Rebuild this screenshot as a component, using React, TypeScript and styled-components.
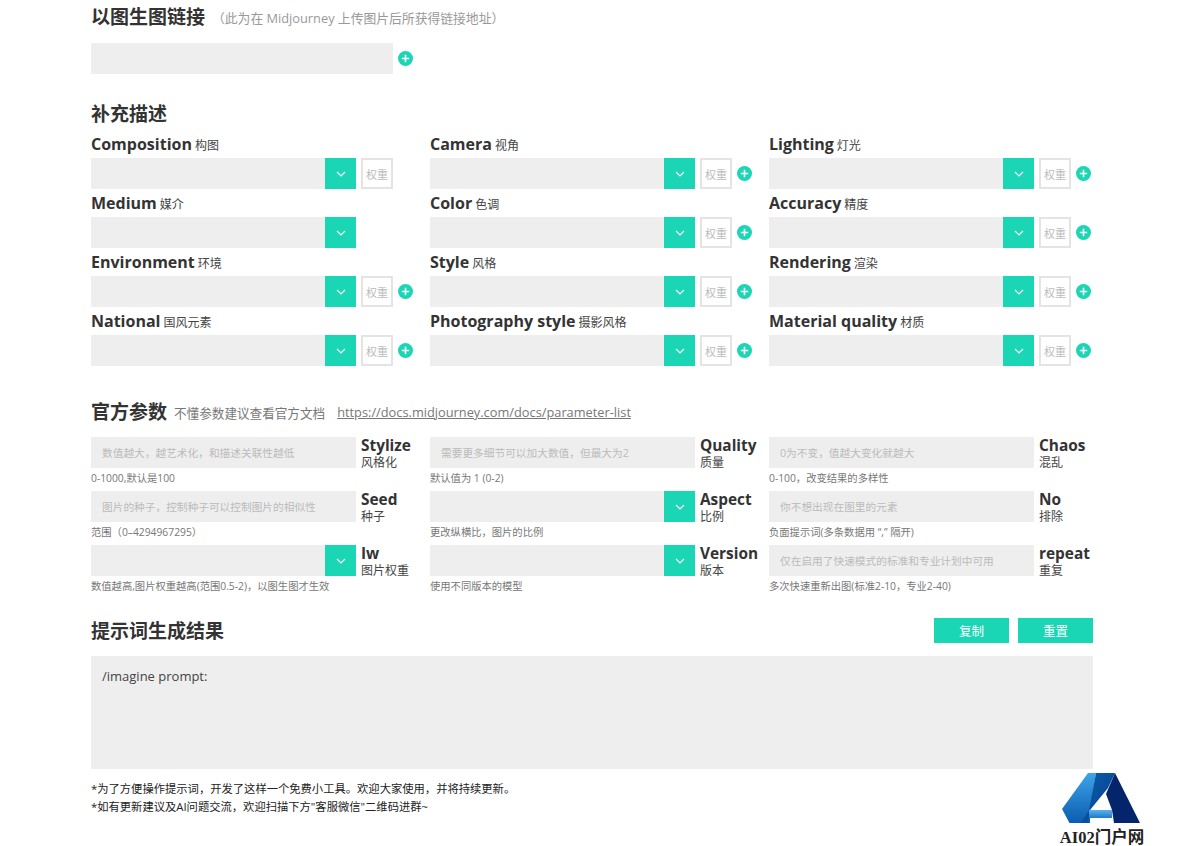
import styled, { createGlobalStyle } from 'styled-components';

const GlobalStyle = createGlobalStyle`
  html, body {
    margin: 0;
    padding: 0;
    background: #fff;
  }
  body {
    font-family: "Open Sans", "Noto Sans CJK SC", sans-serif;
    color: #333;
    overflow: hidden;
  }
`;

const Page = styled.div`
  position: relative;
  width: 1200px;
  height: 846px;
  padding-left: 91px;
  box-sizing: border-box;
  overflow: hidden;
`;

const Content = styled.div`
  width: 1002px;
`;

const Heading = styled.div<{ $height: number; $top?: number }>`
  display: flex;
  align-items: center;
  height: ${(p) => p.$height}px;
  margin-top: ${(p) => p.$top ?? 0}px;
`;

const HeadingTitle = styled.h2`
  margin: 0;
  font-size: 19px;
  line-height: 26px;
  font-weight: 700;
  color: #333;
`;

const HeadingNote = styled.span`
  margin-left: 7px;
  font-size: 12.8px;
  color: #999;
`;

const HeadingHint = styled.span`
  margin-left: 7px;
  font-size: 12.6px;
  color: #777;
`;

const DocLink = styled.a`
  margin-left: 12px;
  font-size: 12.8px;
  color: #777;
  text-decoration: underline;
`;

const LinkRow = styled.div`
  display: flex;
  align-items: center;
  margin-top: 9px;
`;

const WideInput = styled.div`
  width: 302px;
  height: 31px;
  background: #eee;
`;

const PlusIcon = styled.svg`
  display: block;
  flex: none;
  width: 15px;
  height: 15px;
  margin-left: 5px;
`;

const Plus = () => (
  <PlusIcon viewBox="0 0 15 15">
    <circle cx="7.5" cy="7.5" r="7.5" fill="#1bd6b4" />
    <path d="M7.5 3.8v7.4M3.8 7.5h7.4" stroke="#fff" strokeWidth="1.6" />
  </PlusIcon>
);

const DescGrid = styled.div`
  display: grid;
  grid-template-columns: repeat(3, 322px);
  column-gap: 17px;
  margin-top: 2px;
`;

const DescCell = styled.div`
  height: 59px;
`;

const DescLabel = styled.div`
  height: 28px;
  padding-top: 2px;
  box-sizing: border-box;
  font-size: 16px;
  line-height: 24px;
  font-weight: 700;
  color: #333;
  white-space: nowrap;
`;

const LabelSub = styled.span`
  margin-left: 3px;
  font-size: 12px;
  font-weight: 400;
  color: #444;
`;

const FieldRow = styled.div`
  display: flex;
  align-items: center;
`;

const SelectBox = styled.div`
  display: flex;
  justify-content: flex-end;
  flex: none;
  width: 265px;
  height: 31px;
  background: #eee;
`;

const ArrowButton = styled.div`
  display: flex;
  align-items: center;
  justify-content: center;
  width: 31px;
  height: 31px;
  background: #1bd6b4;
`;

const ArrowIcon = styled.svg`
  width: 10px;
  height: 6px;
`;

const Arrow = () => (
  <ArrowButton>
    <ArrowIcon viewBox="0 0 10 6">
      <path d="M1 1l4 4 4-4" fill="none" stroke="#fff" strokeWidth="1.2" />
    </ArrowIcon>
  </ArrowButton>
);

const WeightBox = styled.div`
  flex: none;
  display: flex;
  align-items: center;
  justify-content: center;
  width: 32px;
  height: 31px;
  margin-left: 5px;
  box-sizing: border-box;
  border: 2px solid #e4e4e4;
  font-size: 11px;
  color: #bbb;
`;

const ParamGrid = styled.div`
  display: grid;
  grid-template-columns: repeat(3, 322px);
  column-gap: 17px;
  margin-top: 11px;
`;

const ParamCell = styled.div`
  height: 54px;
`;

const ParamRow = styled.div`
  display: flex;
  height: 31px;
`;

const ParamInput = styled.div`
  flex: none;
  display: flex;
  align-items: center;
  width: 265px;
  height: 31px;
  padding-left: 11px;
  box-sizing: border-box;
  background: #eee;
  font-size: 10.7px;
  color: #bbb;
  white-space: nowrap;
`;

const ParamLabel = styled.div`
  margin-left: 5px;
  white-space: nowrap;
`;

const ParamName = styled.div`
  margin-top: 0;
  font-size: 15.4px;
  line-height: 18px;
  font-weight: 700;
  color: #333;
`;

const ParamSub = styled.div`
  margin-top: 1px;
  font-size: 12px;
  line-height: 14px;
  color: #444;
`;

const ParamHelp = styled.div`
  margin-top: 3px;
  font-size: 10.3px;
  line-height: 15px;
  color: #777;
  white-space: nowrap;
`;

const ResultHeader = styled.div`
  display: flex;
  align-items: center;
  justify-content: space-between;
  margin-top: 14px;
  height: 36px;
`;

const ButtonRow = styled.div`
  display: flex;
  gap: 9px;
  margin-top: -2px;
`;

const ActionButton = styled.button`
  width: 75px;
  height: 25px;
  padding: 0;
  border: 0;
  background: #1bd6b4;
  color: #fff;
  font-family: inherit;
  font-size: 12.5px;
`;

const ResultBox = styled.div`
  height: 113px;
  margin-top: 7px;
  padding: 11px;
  box-sizing: border-box;
  background: #eee;
  font-size: 13px;
  line-height: 18px;
  color: #444;
`;

const Notes = styled.div`
  margin-top: 11px;
  font-size: 11.3px;
  line-height: 18px;
  color: #222;
`;

const Watermark = styled.div`
  position: absolute;
  left: 1052px;
  top: 772px;
  width: 100px;
  text-align: center;
`;

const WatermarkLogo = styled.svg`
  display: block;
  width: 82px;
  height: 52px;
  margin-left: 8px;
`;

const WatermarkText = styled.div`
  margin-top: 4px;
  font-family: "Liberation Serif", "Noto Sans CJK SC", serif;
  font-size: 16.5px;
  line-height: 20px;
  font-weight: 700;
  color: #222;
  white-space: nowrap;
`;

const desc = [
  { name: 'Composition', sub: '构图', weight: true, plus: false },
  { name: 'Camera', sub: '视角', weight: true, plus: true },
  { name: 'Lighting', sub: '灯光', weight: true, plus: true },
  { name: 'Medium', sub: '媒介', weight: false, plus: false },
  { name: 'Color', sub: '色调', weight: true, plus: true },
  { name: 'Accuracy', sub: '精度', weight: true, plus: true },
  { name: 'Environment', sub: '环境', weight: true, plus: true },
  { name: 'Style', sub: '风格', weight: true, plus: true },
  { name: 'Rendering', sub: '渲染', weight: true, plus: true },
  { name: 'National', sub: '国风元素', weight: true, plus: true },
  { name: 'Photography style', sub: '摄影风格', weight: true, plus: true },
  { name: 'Material quality', sub: '材质', weight: true, plus: true },
];

const params = [
  { name: 'Stylize', sub: '风格化', hint: '数值越大，越艺术化，和描述关联性越低', help: '0-1000,默认是100' },
  { name: 'Quality', sub: '质量', hint: '需要更多细节可以加大数值，但最大为2', help: '默认值为 1 (0-2)' },
  { name: 'Chaos', sub: '混乱', hint: '0为不变，值越大变化就越大', help: '0-100，改变结果的多样性' },
  { name: 'Seed', sub: '种子', hint: '图片的种子，控制种子可以控制图片的相似性', help: '范围（0–4294967295）' },
  { name: 'Aspect', sub: '比例', select: true, help: '更改纵横比，图片的比例' },
  { name: 'No', sub: '排除', hint: '你不想出现在图里的元素', help: '负面提示词(多条数据用 “,” 隔开)' },
  { name: 'Iw', sub: '图片权重', select: true, help: '数值越高,图片权重越高(范围0.5-2)，以图生图才生效' },
  { name: 'Version', sub: '版本', select: true, help: '使用不同版本的模型' },
  { name: 'repeat', sub: '重复', hint: '仅在启用了快速模式的标准和专业计划中可用', help: '多次快速重新出图(标准2-10，专业2-40)' },
];

export default function App() {
  return (
    <Page>
      <GlobalStyle />
      <Content>
        <Heading $height={34}>
          <HeadingTitle>以图生图链接</HeadingTitle>
          <HeadingNote>（此为在 Midjourney 上传图片后所获得链接地址）</HeadingNote>
        </Heading>
        <LinkRow>
          <WideInput />
          <Plus />
        </LinkRow>
        <Heading $height={28} $top={26}>
          <HeadingTitle>补充描述</HeadingTitle>
        </Heading>
        <DescGrid>
          {desc.map((d) => (
            <DescCell key={d.name}>
              <DescLabel>
                {d.name}
                <LabelSub>{d.sub}</LabelSub>
              </DescLabel>
              <FieldRow>
                <SelectBox>
                  <Arrow />
                </SelectBox>
                {d.weight && <WeightBox>权重</WeightBox>}
                {d.plus && <Plus />}
              </FieldRow>
            </DescCell>
          ))}
        </DescGrid>
        <Heading $height={28} $top={32}>
          <HeadingTitle>官方参数</HeadingTitle>
          <HeadingHint>不懂参数建议查看官方文档</HeadingHint>
          <DocLink>https://docs.midjourney.com/docs/parameter-list</DocLink>
        </Heading>
        <ParamGrid>
          {params.map((p) => (
            <ParamCell key={p.name}>
              <ParamRow>
                {p.select ? (
                  <SelectBox>
                    <Arrow />
                  </SelectBox>
                ) : (
                  <ParamInput>{p.hint}</ParamInput>
                )}
                <ParamLabel>
                  <ParamName>{p.name}</ParamName>
                  <ParamSub>{p.sub}</ParamSub>
                </ParamLabel>
              </ParamRow>
              <ParamHelp>{p.help}</ParamHelp>
            </ParamCell>
          ))}
        </ParamGrid>
        <ResultHeader>
          <HeadingTitle>提示词生成结果</HeadingTitle>
          <ButtonRow>
            <ActionButton>复制</ActionButton>
            <ActionButton>重置</ActionButton>
          </ButtonRow>
        </ResultHeader>
        <ResultBox>/imagine prompt:</ResultBox>
        <Notes>
          <div>*为了方便操作提示词，开发了这样一个免费小工具。欢迎大家使用，并将持续更新。</div>
          <div>*如有更新建议及AI问题交流，欢迎扫描下方"客服微信"二维码进群~</div>
        </Notes>
      </Content>
      <Watermark>
        <WatermarkLogo viewBox="0 0 82 52">
          <defs>
            <linearGradient id="wmLeft" x1="0" y1="0" x2="0" y2="1">
              <stop offset="0" stopColor="#3fa4e8" />
              <stop offset="1" stopColor="#0a5cb0" />
            </linearGradient>
            <linearGradient id="wmMid" x1="0" y1="0" x2="1" y2="1">
              <stop offset="0" stopColor="#0a5ead" />
              <stop offset="1" stopColor="#083f8c" />
            </linearGradient>
            <linearGradient id="wmBase" x1="0" y1="0" x2="0" y2="1">
              <stop offset="0" stopColor="#5ab4ec" />
              <stop offset="1" stopColor="#1e78cc" />
            </linearGradient>
          </defs>
          <path d="M28 1H36L30 38V51H9.5L2 37Z" fill="url(#wmLeft)" />
          <path d="M36 1H55L48 16L30 38L28 51H21L29 38Z" fill="url(#wmMid)" />
          <path d="M55 1L80 51H54L52 38L46 22Z" fill="#04256b" />
          <path d="M29 38H52V46H29Z" fill="url(#wmBase)" />
        </WatermarkLogo>
        <WatermarkText>AI02门户网</WatermarkText>
      </Watermark>
    </Page>
  );
}
